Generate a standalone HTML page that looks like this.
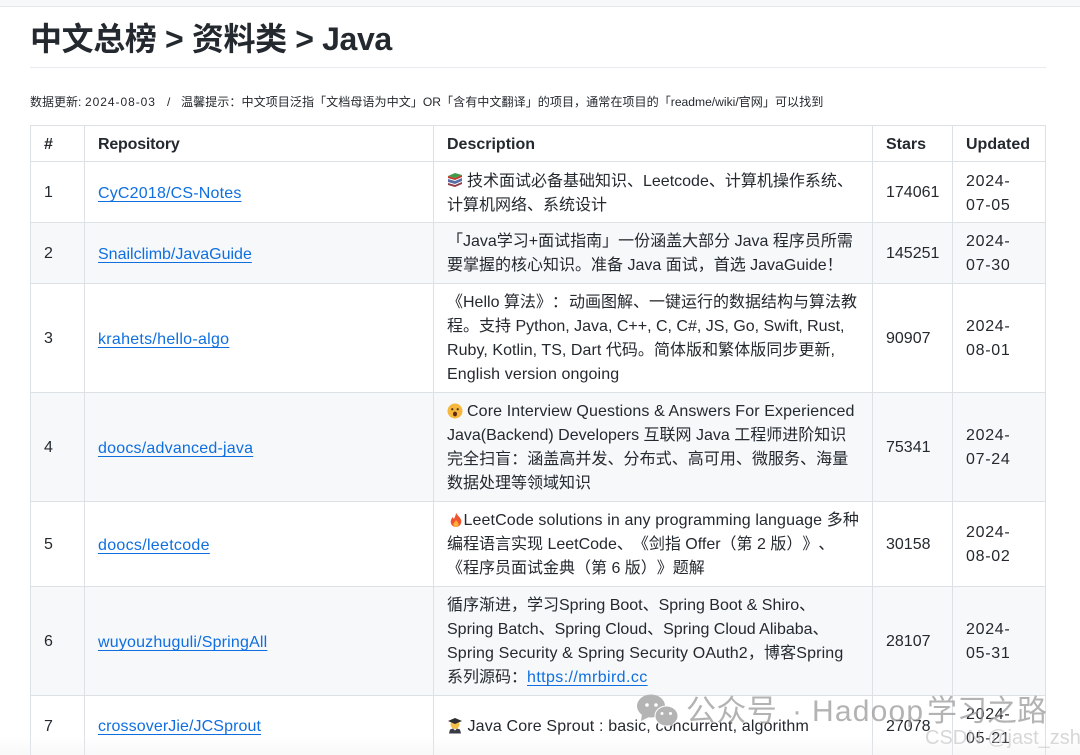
<!DOCTYPE html>
<html lang="zh"><head><meta charset="utf-8"><title>中文总榜 > 资料类 > Java</title>
<style>
html,body{margin:0;padding:0;background:#fff}
body{width:1080px;height:755px;overflow:hidden;position:relative;font-family:"Liberation Sans","Noto Sans CJK SC",sans-serif;color:#24292f;text-spacing-trim:space-all}
#p{position:absolute;left:0;top:0;width:1080px;height:755px;overflow:hidden;filter:blur(.35px)}
#p div{position:absolute}
.t{font-size:16px;line-height:24px;height:24px;white-space:nowrap;margin-top:1px}
.d{letter-spacing:.7px}
.h{font-weight:700}
.s{font-size:12px;line-height:18px;top:93px;white-space:nowrap}
.w{font-size:30px;line-height:38px;top:693px;white-space:nowrap;color:rgba(150,150,150,.72)}
a{color:#0f6fe0;text-decoration:underline;text-underline-offset:3px}
.bg{background:#f6f8fa;left:30px;width:1015px}
.hl{left:30px;width:1016px;height:1px;background:#dce1e6}
.vl{top:125px;height:630px;width:1px;background:#dce1e6}
svg{position:absolute}
</style></head><body><div id="p">
<div style="left:0;top:0;width:1080px;height:6px;background:#f6f8fa;border-bottom:1px solid #e4e8ec"></div>
<div style="left:30px;top:18px;font-size:32px;line-height:42px;font-weight:700;white-space:nowrap;color:#24292f;letter-spacing:-.37px">中文总榜 &gt; 资料类 &gt; Java</div>
<div style="left:30px;top:67px;width:1016px;height:1px;background:#e9ecef"></div>
<div class="s" style="left:30px">数据更新:</div>
<div class="s" style="left:85px;letter-spacing:.95px">2024-08-03</div>
<div class="s" style="left:167px">/</div>
<div class="s" style="left:181px;font-size:12.1px">温馨提示：中文项目泛指「文档母语为中文」OR「含有中文翻译」的项目，通常在项目的「readme/wiki/官网」可以找到</div>

<div class="bg" style="top:223px;height:60px"></div>
<div class="bg" style="top:393px;height:108px"></div>
<div class="bg" style="top:587px;height:108px"></div>

<div class="hl" style="top:125px"></div>
<div class="hl" style="top:161px"></div>
<div class="hl" style="top:222px"></div>
<div class="hl" style="top:283px"></div>
<div class="hl" style="top:392px"></div>
<div class="hl" style="top:501px"></div>
<div class="hl" style="top:586px"></div>
<div class="hl" style="top:695px"></div>
<div class="vl" style="left:30px"></div>
<div class="vl" style="left:84px"></div>
<div class="vl" style="left:433px"></div>
<div class="vl" style="left:872px"></div>
<div class="vl" style="left:952px"></div>
<div class="vl" style="left:1045px"></div>

<div class="t h" style="left:44px;top:132px">#</div>
<div class="t h" style="left:98px;top:132px;letter-spacing:-.2px">Repository</div>
<div class="t h" style="left:447px;top:132px">Description</div>
<div class="t h" style="left:886px;top:132px">Stars</div>
<div class="t h" style="left:966px;top:132px">Updated</div>

<div class="t" style="left:44px;top:180px">1</div>
<div class="t" style="left:98px;top:181px;letter-spacing:.19px"><a>CyC2018/CS-Notes</a></div>
<svg style="left:447px;top:172px" width="16" height="16" viewBox="0 0 16 16"><path d="M1 4l7-3 7 2-7 3z" fill="#3f9b4a"/><path d="M1 4l7 2 7-3v2L8 8 1 6z" fill="#c0392b"/><path d="M1 7l7 2 7-3v3l-7 3-7-2z" fill="#5a6fa8"/><path d="M1 11l7 2 7-3v2l-7 3-7-2z" fill="#8e3b46"/></svg>
<div class="t" style="left:467px;top:169px">技术面试必备基础知识、Leetcode、计算机操作系统、</div>
<div class="t" style="left:447px;top:193px">计算机网络、系统设计</div>
<div class="t" style="left:886px;top:180px">174061</div>
<div class="t d" style="left:966px;top:169px">2024-</div>
<div class="t d" style="left:966px;top:193px">07-05</div>

<div class="t" style="left:44px;top:241px">2</div>
<div class="t" style="left:98px;top:242px"><a>Snailclimb/JavaGuide</a></div>
<div class="t" style="left:447px;top:229px">「Java学习+面试指南」一份涵盖大部分 Java 程序员所需</div>
<div class="t" style="left:447px;top:253px">要掌握的核心知识。准备 Java 面试，首选 JavaGuide！</div>
<div class="t" style="left:886px;top:241px">145251</div>
<div class="t d" style="left:966px;top:229px">2024-</div>
<div class="t d" style="left:966px;top:253px">07-30</div>

<div class="t" style="left:44px;top:326px">3</div>
<div class="t" style="left:98px;top:327px;letter-spacing:.28px"><a>krahets/hello-algo</a></div>
<div class="t" style="left:447px;top:290px">《Hello 算法》：</div>
<div class="t" style="left:569px;top:290px">动画图解、一键运行的数据结构与算法教</div>
<div class="t" style="left:447px;top:314px">程。支持 Python, Java, C++, C, C#, JS, Go, Swift, Rust,</div>
<div class="t" style="left:447px;top:338px;letter-spacing:.05px">Ruby, Kotlin, TS, Dart 代码。简体版和繁体版同步更新,</div>
<div class="t" style="left:447px;top:362px;letter-spacing:.1px">English version ongoing</div>
<div class="t" style="left:886px;top:326px">90907</div>
<div class="t d" style="left:966px;top:314px">2024-</div>
<div class="t d" style="left:966px;top:338px">08-01</div>

<div class="t" style="left:44px;top:435px">4</div>
<div class="t" style="left:98px;top:436px;letter-spacing:.21px"><a>doocs/advanced-java</a></div>
<svg style="left:447px;top:403px" width="16" height="16" viewBox="0 0 16 16"><circle cx="8" cy="8" r="7.500" fill="#f6b73c"/><circle cx="5.300" cy="6.200" r="1.100" fill="#4a2f12"/><circle cx="10.700" cy="6.200" r="1.100" fill="#4a2f12"/><ellipse cx="8" cy="11" rx="2" ry="2.400" fill="#5a2a12"/></svg>
<div class="t" style="left:467px;top:399px;letter-spacing:.12px">Core Interview Questions &amp; Answers For Experienced</div>
<div class="t" style="left:447px;top:423px">Java(Backend) Developers 互联网 Java 工程师进阶知识</div>
<div class="t" style="left:447px;top:447px;letter-spacing:.05px">完全扫盲：涵盖高并发、分布式、高可用、微服务、海量</div>
<div class="t" style="left:447px;top:471px">数据处理等领域知识</div>
<div class="t" style="left:886px;top:435px">75341</div>
<div class="t d" style="left:966px;top:423px">2024-</div>
<div class="t d" style="left:966px;top:447px">07-24</div>

<div class="t" style="left:44px;top:532px">5</div>
<div class="t" style="left:98px;top:533px;letter-spacing:.3px"><a>doocs/leetcode</a></div>
<svg style="left:449px;top:512px" width="14" height="16" viewBox="0 0 16 17"><path d="M8 0c1 3 5 5 6 9 .6 4-2.500 7.500-6 7.500S1.500 13.500 2 9.500c.3-2 1.500-3 2-4.500.8 1 1.200 1.500 1.500 2.500C6.500 5.500 8 3 8 0z" fill="#f0532d"/><path d="M8 8c.5 2 3 3 3 5.500 0 1.800-1.300 3-3 3s-3-1.200-3-3c0-2 2.500-3 3-5.500z" fill="#fbb03b"/></svg>
<div class="t" style="left:463.500px;top:508px;letter-spacing:.12px">LeetCode solutions in any programming language 多种</div>
<div class="t" style="left:447px;top:532px">编程语言实现 LeetCode、《剑指 Offer（第 2 版）》、</div>
<div class="t" style="left:447px;top:556px">《程序员面试金典（第 6 版）》题解</div>
<div class="t" style="left:886px;top:532px">30158</div>
<div class="t d" style="left:966px;top:520px">2024-</div>
<div class="t d" style="left:966px;top:544px">08-02</div>

<div class="t" style="left:44px;top:629px">6</div>
<div class="t" style="left:98px;top:630px;letter-spacing:.18px"><a>wuyouzhuguli/SpringAll</a></div>
<div class="t" style="left:447px;top:593px">循序渐进，学习Spring Boot、Spring Boot &amp; Shiro、</div>
<div class="t" style="left:447px;top:617px">Spring Batch、Spring Cloud、Spring Cloud Alibaba、</div>
<div class="t" style="left:447px;top:641px;letter-spacing:.14px">Spring Security &amp; Spring Security OAuth2，博客Spring</div>
<div class="t" style="left:447px;top:665px">系列源码：<a style="letter-spacing:.4px">https://mrbird.cc</a></div>
<div class="t" style="left:886px;top:629px">28107</div>
<div class="t d" style="left:966px;top:617px">2024-</div>
<div class="t d" style="left:966px;top:641px">05-31</div>

<div class="t" style="left:44px;top:714px">7</div>
<div class="t" style="left:98px;top:714px;letter-spacing:.1px"><a>crossoverJie/JCSprout</a></div>
<svg style="left:447px;top:717px" width="16" height="17" viewBox="0 0 16 17"><circle cx="8" cy="7.500" r="4.500" fill="#f5c04a"/><path d="M1 4l7-3 7 3-7 3z" fill="#2d2d33"/><path d="M3 12.500l3-1 2 2 2-2 3 1 1 4H2z" fill="#3a3a44"/></svg>
<div class="t" style="left:467.500px;top:714px;letter-spacing:.15px">Java Core Sprout : basic, concurrent, algorithm</div>
<div class="t" style="left:886px;top:714px">27078</div>
<div class="t d" style="left:966px;top:702px">2024-</div>
<div class="t d" style="left:966px;top:726px">05-21</div>

<svg style="left:637px;top:694px" width="42" height="34" viewBox="0 0 42 34"><ellipse cx="14" cy="12" rx="14" ry="11.500" fill="#b4b4b4"/><path d="M5 20l-1 7 8-4z" fill="#b4b4b4"/><circle cx="10" cy="11" r="1.800" fill="#fff"/><circle cx="19" cy="11" r="1.800" fill="#fff"/><ellipse cx="29.500" cy="22" rx="11.500" ry="10" fill="#b4b4b4" stroke="#fff"/><path d="M35 29l2 4-6-3z" fill="#b4b4b4"/><circle cx="25" cy="19.500" r="1.500" fill="#fff"/><circle cx="33.500" cy="19.500" r="1.500" fill="#fff"/></svg>
<div class="w" style="left:686px;letter-spacing:.4px">公众号</div>
<div class="w" style="left:792px">·</div>
<div class="w" style="left:812px;letter-spacing:1.200px">Hadoop</div>
<div class="w" style="left:927px">学习之路</div>
<div style="left:925px;top:724px;font-size:20px;line-height:28px;white-space:nowrap;color:rgba(180,180,180,.55)">CSDN @jast_zsh</div>
<div style="left:0;top:735px;width:1080px;height:20px;background:linear-gradient(rgba(235,235,235,0),rgba(235,235,235,.35))"></div>
</div></body></html>
